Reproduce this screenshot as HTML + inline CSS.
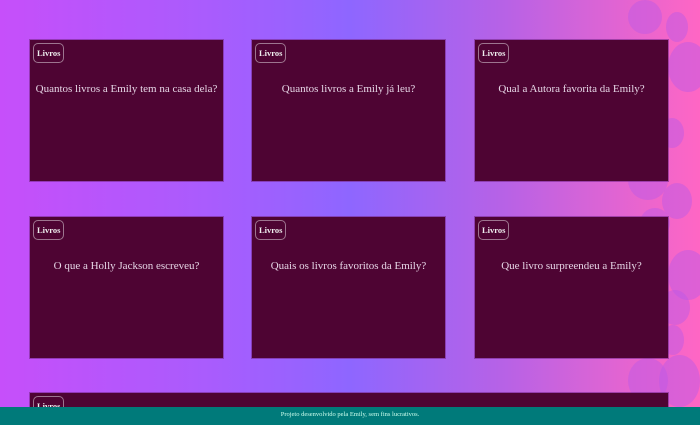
<!DOCTYPE html>
<html><head><style>
html,body{margin:0;width:700px;height:425px;overflow:hidden}
body{background:linear-gradient(90deg,#c64ffa 0%,#a95cfd 30%,#8e66ff 50%,#b762e6 72%,#ff66c4 100%);position:relative;font-family:"Liberation Serif",serif}
.b{position:absolute;border-radius:50%;background:rgba(190,90,230,.5)}
.c{position:absolute;width:193px;height:141px;background:#4e0433;box-shadow:0 0 0 1px rgba(120,40,140,.6)}
.t{position:absolute;left:3px;top:3px;padding:4px 3px;border:1px solid rgba(255,255,255,.45);border-radius:5px;color:#eee;font-weight:bold;font-size:8.5px;line-height:10px}
.q{position:absolute;left:0;right:0;top:43px;text-align:center;color:#e6d6e6;font-size:11px;white-space:nowrap}
.f{position:absolute;left:0;top:407px;width:700px;height:18px;background:#007a7a;color:#cfe;font-size:6.5px;text-align:center;line-height:15px}
</style></head><body>
<div class="b" style="left:628px;top:0;width:34px;height:34px"></div>
<div class="b" style="left:666px;top:12px;width:22px;height:30px"></div>
<div class="b" style="left:668px;top:42px;width:40px;height:50px"></div>
<div class="b" style="left:660px;top:118px;width:24px;height:30px"></div>
<div class="b" style="left:628px;top:160px;width:40px;height:40px"></div>
<div class="b" style="left:662px;top:183px;width:30px;height:36px"></div>
<div class="b" style="left:640px;top:208px;width:30px;height:30px"></div>
<div class="b" style="left:668px;top:250px;width:40px;height:50px"></div>
<div class="b" style="left:660px;top:290px;width:30px;height:35px"></div>
<div class="b" style="left:662px;top:325px;width:22px;height:30px"></div>
<div class="b" style="left:628px;top:358px;width:40px;height:45px"></div>
<div class="b" style="left:659px;top:355px;width:41px;height:52px"></div>
<div class="c" style="left:30px;top:40px"><span class="t">Livros</span><div class="q">Quantos livros a Emily tem na casa dela?</div></div>
<div class="c" style="left:252px;top:40px"><span class="t">Livros</span><div class="q">Quantos livros a Emily já leu?</div></div>
<div class="c" style="left:475px;top:40px"><span class="t">Livros</span><div class="q">Qual a Autora favorita da Emily?</div></div>
<div class="c" style="left:30px;top:217px"><span class="t">Livros</span><div class="q">O que a Holly Jackson escreveu?</div></div>
<div class="c" style="left:252px;top:217px"><span class="t">Livros</span><div class="q">Quais os livros favoritos da Emily?</div></div>
<div class="c" style="left:475px;top:217px"><span class="t">Livros</span><div class="q">Que livro surpreendeu a Emily?</div></div>
<div class="c" style="left:30px;top:393px;width:638px;height:32px"><span class="t">Livros</span></div>
<div class="f">Projeto desenvolvido pela Emily, sem fins lucrativos.</div>
</body></html>
